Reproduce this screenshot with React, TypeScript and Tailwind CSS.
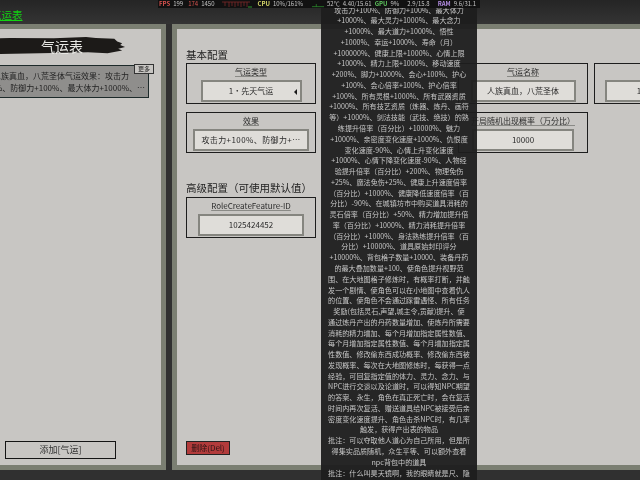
const tooltipLines = [
  "攻击力+100%、防御力+100%、最大体力",
  "+1000%、最大灵力+1000%、最大念力",
  "+1000%、最大道力+1000%、悟性",
  "+1000%、幸运+1000%、寿命（月）",
  "+100000%、健康上限+1000%、心情上限",
  "+1000%、精力上限+1000%、移动速度",
  "+200%、脚力+1000%、会心+100%、护心",
  "+100%、会心倍率+100%、护心倍率",
  "+100%、所有灵根+1000%、所有武器资质",
  "+1000%、所有技艺资质（炼器、炼丹、画符",
  "等）+1000%、剑法技能（武技、绝技）的熟",
  "练提升倍率（百分比）+10000%、魅力",
  "+1000%、亲密度变化速度+1000%、仇恨度",
  "变化速度-90%、心情上升变化速度",
  "+1000%、心情下降变化速度-90%、人物经",
  "验提升倍率（百分比）+200%、物理免伤",
  "+25%、魔法免伤+25%、健康上升速度倍率",
  "（百分比）+1000%、健康降低速度倍率（百",
  "分比）-90%、在城镇坊市中购买道具消耗的",
  "灵石倍率（百分比）+50%、精力增加提升倍",
  "率（百分比）+1000%、精力消耗提升倍率",
  "（百分比）+1000%、身法熟练提升倍率（百",
  "分比）+10000%、道具原始封印评分",
  "+10000%、背包格子数量+10000、装备丹药",
  "的最大叠加数量+100、使角色提升视野范",
  "围、在大地图格子修炼时，有概率打断，并触",
  "发一个剧情、使角色可以在小地图中查看仇人",
  "的位置、使角色不会通过踩雷遇怪、所有任务",
  "奖励(包括灵石,声望,城主令,贡献)提升、使",
  "通过炼丹产出的丹药数量增加、使炼丹所需要",
  "消耗的精力增加、每个月增加指定属性数值、",
  "每个月增加指定属性数值、每个月增加指定属",
  "性数值、修改偷东西成功概率、修改偷东西被",
  "发现概率、每次在大地图修炼时，每获得一点",
  "经验，可回复指定值的体力、灵力、念力、与",
  "NPC进行交谈以及论道时，可以得知NPC期望",
  "的答案、永生，角色在真正死亡时，会在复活",
  "时间内再次复活、赠送道具给NPC被接受后亲",
  "密度变化速度提升、角色击杀NPC时，有几率",
  "触发，获得产出表的物品",
  "批注：可以夺取他人道心为自己所用，但是所",
  "得集实品质随机，众生平等、可以额外查看",
  "npc背包中的道具",
  "批注：什么叫昊天镜啊，我的眼睛就是尺、隐",
]

function Field({
  label,
  value,
  inputClass,
  arrow,
}: {
  label: string
  value: string
  inputClass: string
  arrow?: boolean
}) {
  return (
    <div className="flex h-[41px] flex-col items-center border border-[#1d1d1d] pt-[2px]">
      <span className="text-[8px] leading-[12px] text-[#2b2b2b] underline decoration-[#8a8a86] underline-offset-1 whitespace-nowrap">
        {label}
      </span>
      <div
        className={`relative mt-[2px] flex h-[22px] items-center justify-center overflow-hidden border-2 border-[#85857f] bg-[#dfddd9] text-[8px] text-[#2b2b2b] whitespace-nowrap ${inputClass}`}
      >
        {value}
        {arrow && <span className="absolute right-[3px] top-[7px] h-0 w-0 border-y-[3px] border-r-[3px] border-y-transparent border-r-[#1a1a1a]" />}
      </div>
    </div>
  )
}

function Stats() {
  return (
    <div className="absolute left-[158px] top-0 flex h-[8px] w-[322px] items-center gap-[3px] bg-[#111111] px-[1px] text-[6px] leading-[8px] text-[#c4c4c4] whitespace-nowrap">
      <span className="font-bold text-[#d9534f]">FPS</span>
      <span>199</span>
      <span className="ml-[2px] text-[#d9534f]">174</span>
      <span>1450</span>
      <svg width="34" height="7" viewBox="0 0 30 7" className="ml-[2px]">
        <path d="M0 1H28M3 1V5M7 1V6M10 1V5M13 1V6M16 1V5M19 1V6M22 1V5M25 1V6" stroke="#8a2b2b" strokeWidth="0.7" fill="none" />
        <path d="M26 6H30" stroke="#2f9a2f" strokeWidth="1" />
      </svg>
      <span className="ml-[1px] font-bold text-[#d8d86a]">CPU</span>
      <span>10%/161%</span>
      <svg width="12" height="7" viewBox="0 0 14 7" className="ml-[6px]">
        <path d="M0 6H14M5 6V3" stroke="#2f9a2f" strokeWidth="0.8" fill="none" />
      </svg>
      <span>52℃</span>
      <span>4.40/15.61</span>
      <span className="font-bold text-[#5ec45e]">GPU</span>
      <span>9%</span>
      <span className="ml-[5px]">2.9/15.8</span>
      <span className="ml-[5px] font-bold text-[#b18be0]">RAM</span>
      <span>9.6/31.1</span>
    </div>
  )
}

export default function App() {
  return (
    <div className="relative h-[480px] w-[640px] overflow-hidden bg-[#303030] font-['Noto_Sans_CJK_SC','Liberation_Sans',sans-serif] blur-[0.4px]">
      <div className="flex h-[24px] items-end bg-gradient-to-b from-[#252525] to-[#343434] pb-[2px]">
        <span className="-ml-[9px] text-[10.5px] leading-[14px] text-[#12d612] underline underline-offset-1">气运表</span>
      </div>

      <div className="flex h-[446px] gap-[6px]">
        {/* left list panel, runs off the page */}
        <div className="-ml-[34px] flex w-[200px] shrink-0 flex-col border-[5px] border-[#7b7f72] bg-[#c8c6c3] pl-[34px]">
          <div className="relative -ml-[34px] mt-[8px] flex h-[18px] items-center justify-center">
            <svg viewBox="0 0 160 20" preserveAspectRatio="none" className="absolute inset-0 h-full w-[156px]">
              <path d="M0 2L40 1L85 1.5L118 0L128 1L147 2L150 5L155 7L153 9L158 11L151 13L155 15L140 18L120 17L70 18L30 19L0 20Z" fill="#1c1a18" />
            </svg>
            <span className="relative -ml-[8px] text-[14px] leading-[18px] text-[#e8e8e4]">气运表</span>
          </div>
          <div className="relative -ml-[34px] mr-[12px] mt-[10px] h-[33px] border border-[#1d2a2a] bg-[#8f8e8c] text-right text-[8px] leading-[12px] text-[#232323]">
            <div className="whitespace-nowrap pr-[19px] pt-[4px]">人族真血，八荒圣体气运效果：攻击力</div>
            <div className="whitespace-nowrap pr-[3px]">+100%、防御力+100%、最大体力+1000%、…</div>
            <span className="absolute -right-[6px] -top-[2px] border border-[#333] bg-[#c8c6c3] px-[3px] text-[6px] leading-[8px]">更多</span>
          </div>
          <button className="mb-[6px] mt-auto h-[18px] w-[111px] border border-[#151515] text-[9px] leading-[16px] text-[#333]">
            添加[气运]
          </button>
        </div>

        {/* form panel */}
        <div className="flex w-[480px] shrink-0 flex-col border-[5px] border-r-0 border-[#7b7f72] bg-[#c8c6c3] pl-[9px]">
          <h2 className="mt-[19px] text-[10.5px] leading-[14px] text-[#222]">基本配置</h2>
          <div className="mt-[1px] grid grid-cols-[130px_130px_130px_130px] gap-x-[6px] gap-y-[8px]">
            <Field label="气运类型" value="1·先天气运" inputClass="w-[101px]" arrow />
            <div />
            <Field label="气运名称" value="人族真血，八荒圣体" inputClass="w-[105px]" />
            <Field label="气运ID" value="1025424452" inputClass="w-[108px]" />
            <Field label="效果" value="攻击力+100%、防御力+…" inputClass="w-[116px] tracking-[0.4px]" />
            <div />
            <Field label="开局随机出现概率（万分比）" value="10000" inputClass="w-[102px]" />
          </div>
          <h2 className="mt-[28px] text-[10.5px] leading-[14px] text-[#222]">高级配置（可使用默认值）</h2>
          <div className="mt-[2px] w-[130px]">
            <Field label="RoleCreateFeature-ID" value="1025424452" inputClass="w-[106px]" />
          </div>
          <button className="mb-[10px] mt-auto h-[14px] w-[44px] border border-[#222] bg-[#b23b3b] text-[8px] leading-[12px] text-[#2a1414]">
            删除(Del)
          </button>
        </div>
      </div>

      {/* hover tooltip */}
      <div className="absolute left-[321px] top-0 h-[480px] w-[156px] overflow-hidden bg-[#1e1e1e]/95 pt-[4.6px] text-center text-[7.1px] leading-[10.77px] text-[#c6c6c6]">
        {tooltipLines.map((line, i) => (
          <div key={i} className="whitespace-nowrap">
            {line}
          </div>
        ))}
      </div>

      <Stats />
    </div>
  )
}
